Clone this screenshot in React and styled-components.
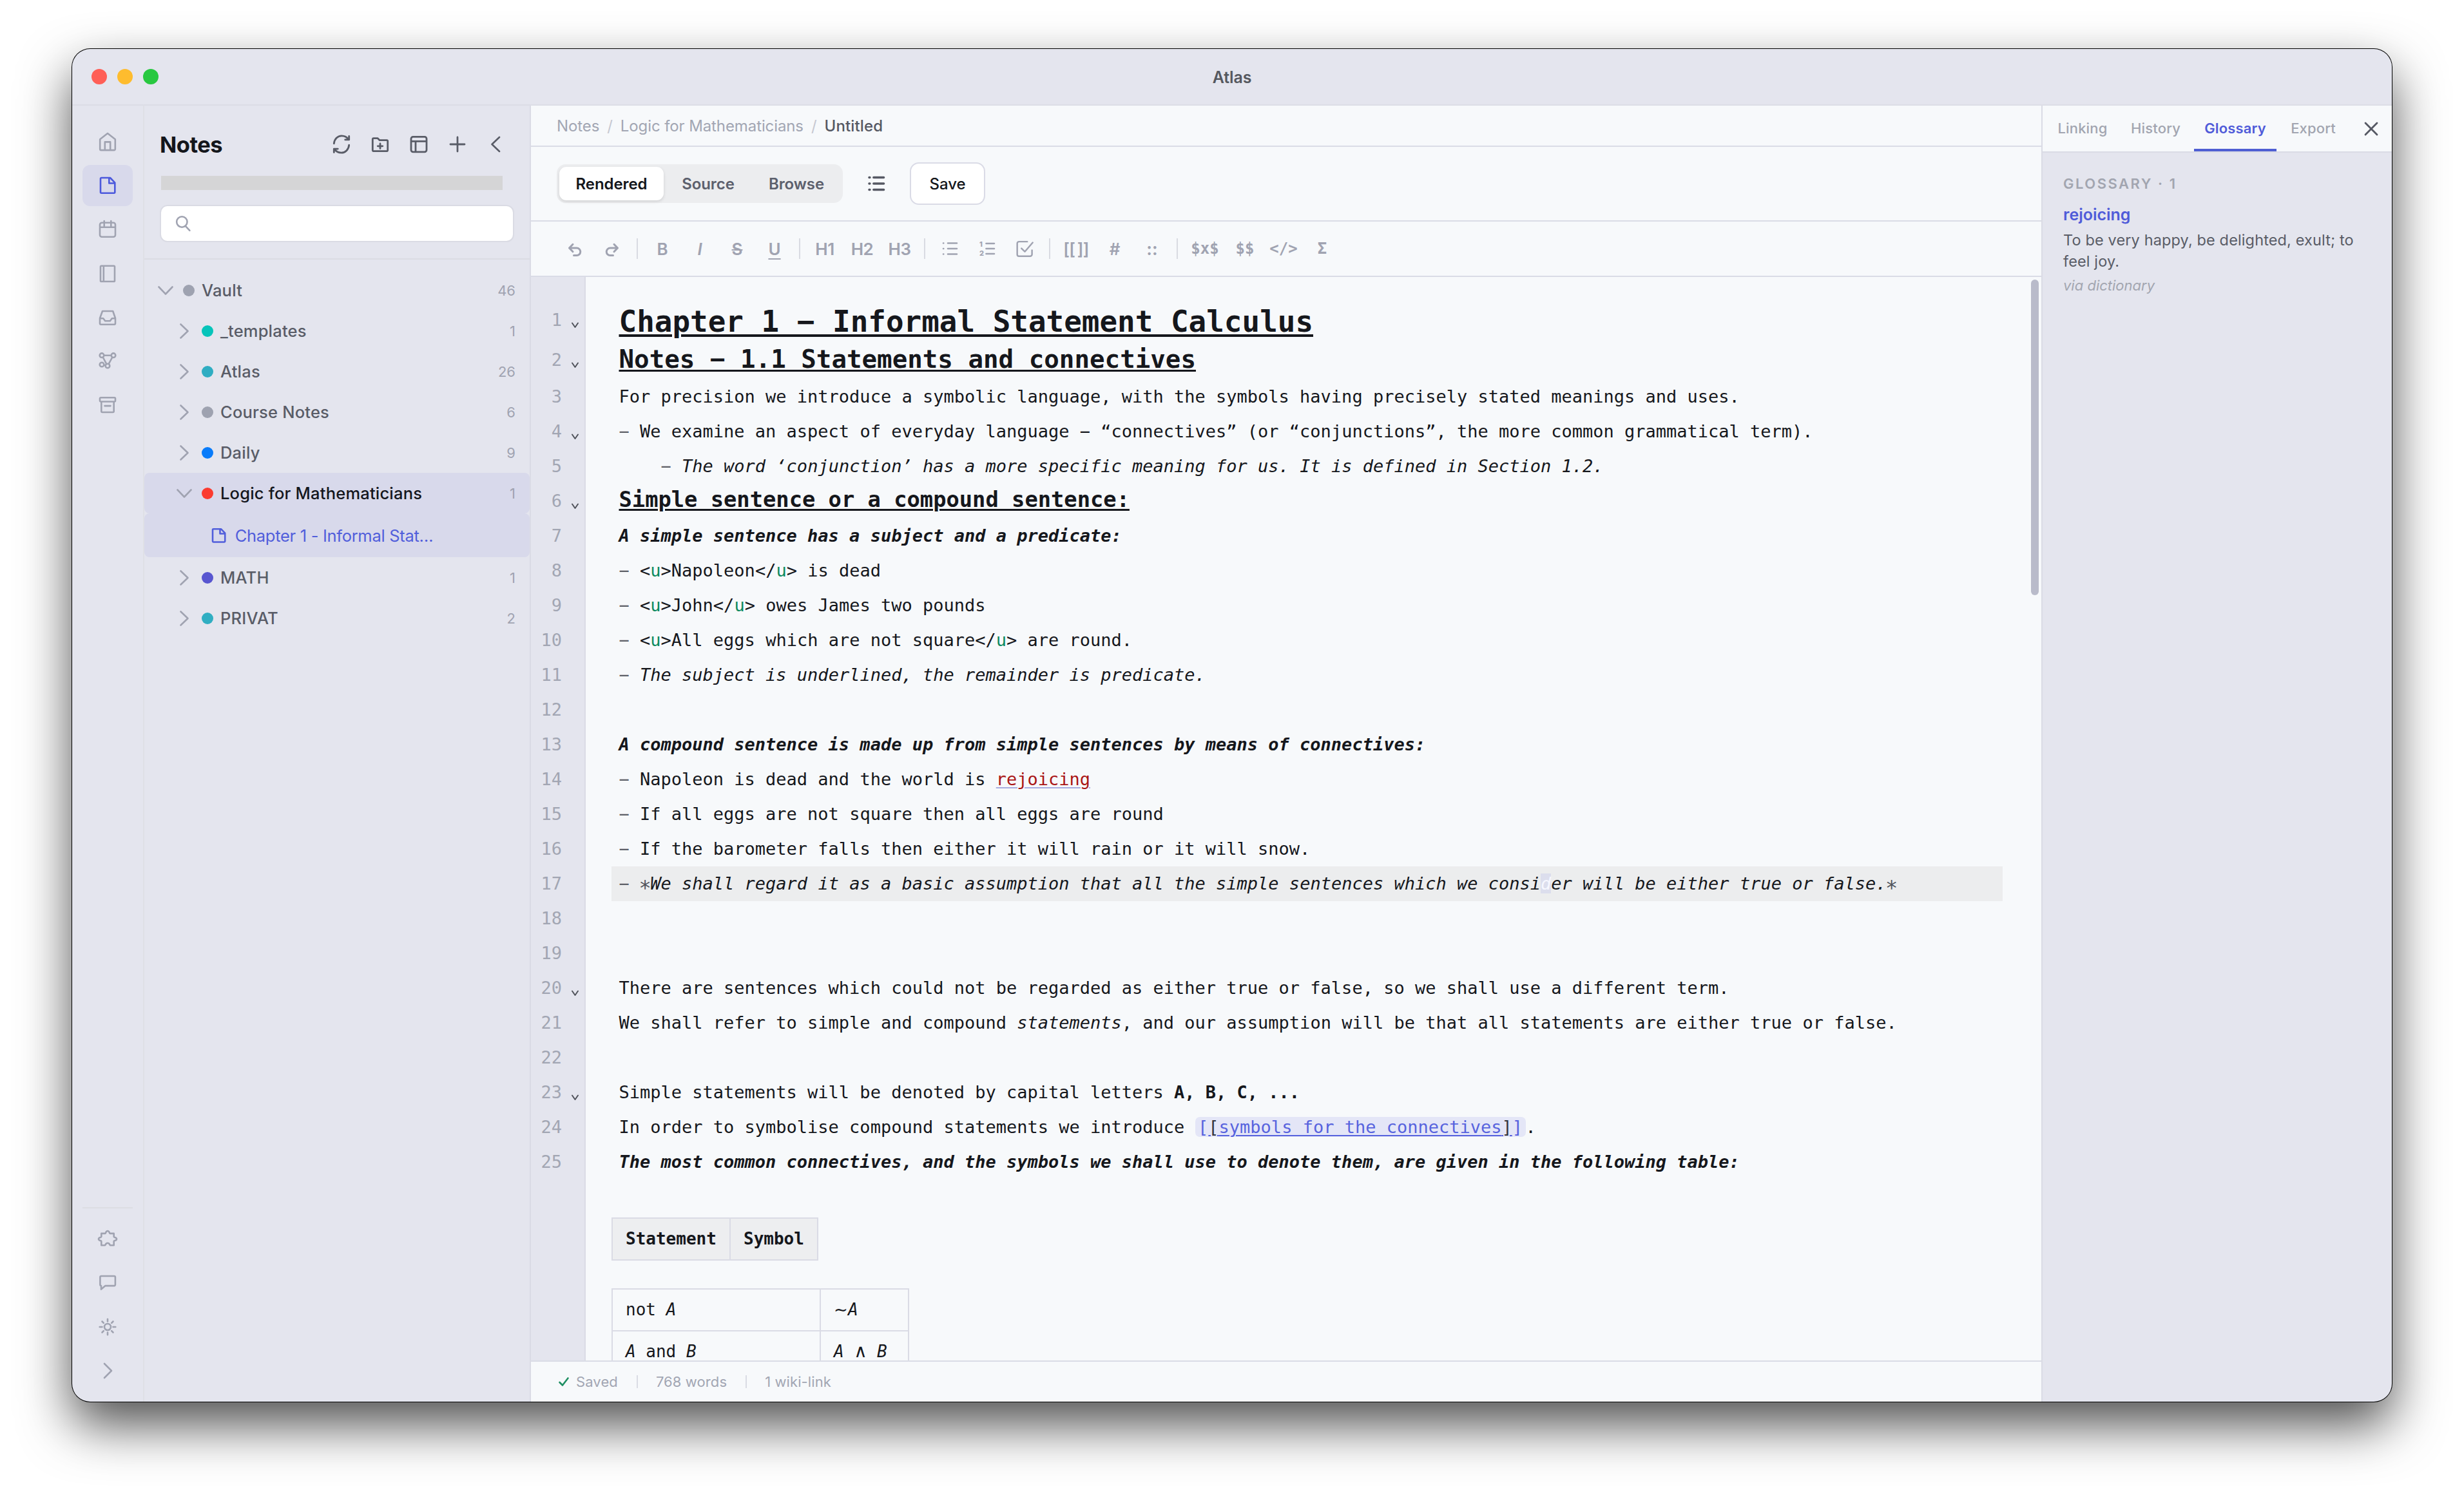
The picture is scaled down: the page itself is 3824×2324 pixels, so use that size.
import React from "react";
import styled, { createGlobalStyle } from "styled-components";


const sans = `"Inter", "Liberation Sans", sans-serif`;
const mono = `"DejaVu Sans Mono", "Liberation Mono", monospace`;

const GlobalStyle = createGlobalStyle`
    * {
        box-sizing: border-box;
    }
    body {
        margin: 0;
        background-color: #fff;
        font-family: ${sans};
    }
`;

// window
const Page = styled.div`
    width: 3824px;
    height: 2324px;
    padding: 76px 112px;
    background-color: #fff;
    overflow: hidden;
`;
const Window = styled.div`
    width: 3600px;
    height: 2100px;
    display: flex;
    flex-direction: column;
    border-radius: 28px;
    overflow: hidden;
    background-color: #e4e5ee;
    box-shadow: 0 0 0 1px #000, 0 36px 80px rgba(0, 0, 0, 0.69);
`;
const TitleBar = styled.div`
    height: 88px;
    flex: none;
    display: grid;
    grid-template-columns: 1fr auto 1fr;
    align-items: center;
    padding: 0 30px;
    border-bottom: 2px solid #dcdde6;
`;
const Lights = styled.div`
    display: flex;
    gap: 16px;
`;
const Light = styled.span`
    width: 24px;
    height: 24px;
    border-radius: 50%;
    background-color: ${(props) => props.$color};
`;
const WindowTitle = styled.div`
    padding-top: 1px;
    font-size: 25px;
    font-weight: 600;
    letter-spacing: -0.1px;
    color: #55585f;
`;
const Body = styled.div`
    flex: 1;
    min-height: 0;
    display: flex;
`;

// left rail
const Rail = styled.nav`
    width: 112px;
    padding: 24px 16px 16px;
    border-right: 2px solid #dfe0e6;
    display: flex;
    flex-direction: column;
    justify-content: space-between;
`;
const RailGroup = styled.div`
    display: flex;
    flex-direction: column;
    gap: 4px;
    ${(props) => props.$bottom && "border-top: 2px solid #dcdde3; padding-top: 16px;"}
`;
const RailButton = styled.div`
    height: 64px;
    border-radius: 12px;
    display: flex;
    align-items: center;
    justify-content: center;
    color: ${(props) => (props.$active ? "#4c59dc" : "#a0a3b1")};
    background-color: ${(props) => (props.$active ? "#d8d9eb" : "transparent")};
`;
const Svg = styled.svg`
    display: block;
    flex: none;
    fill: none;
    stroke: currentColor;
    stroke-linecap: round;
    stroke-linejoin: round;
    overflow: visible;
`;

// notes panel
const Sidebar = styled.aside`
    width: 600px;
    border-right: 2px solid #dadbe5;
`;
const SidebarHead = styled.div`
    height: 239px;
    padding: 30px 24px 0;
    border-bottom: 2px solid #dadbe3;
`;
const SidebarTop = styled.div`
    height: 60px;
    display: flex;
    align-items: center;
    justify-content: space-between;
`;
const SidebarTitle = styled.h2`
    margin: 0;
    font-size: 34.5px;
    font-weight: 700;
    letter-spacing: -0.5px;
    color: #14161b;
`;
const HeadActions = styled.div`
    display: flex;
    gap: 24px;
    padding-right: 10px;
    color: #595c67;
`;
const PathBar = styled.div`
    width: 530px;
    height: 22px;
    margin: 19px 0 0 2px;
    background-color: #d5d5d6;
`;
const Search = styled.div`
    height: 58px;
    margin-top: 23px;
    padding-left: 19px;
    display: flex;
    align-items: center;
    border: 2px solid #dadbe4;
    border-radius: 12px;
    background-color: #fff;
    color: #a0a3b1;
`;
const Tree = styled.div`
    padding-top: 16px;
`;
const TreeRow = styled.div`
    height: ${(props) => (props.$file ? 68 : 63)}px;
    padding: 0 22px 0 ${(props) => 20 + props.$depth * 29}px;
    display: flex;
    align-items: center;
    border-radius: 8px;
    font-size: 25.5px;
    letter-spacing: ${(props) => (props.$file ? -0.3 : 0.2)}px;
    font-weight: ${(props) => (props.$file ? 400 : props.$active ? 500 : 450)};
    color: ${(props) => (props.$file ? "#515edb" : props.$active ? "#14161d" : "#595c67")};
    background-color: ${(props) => (props.$active ? "#d8d9eb" : "transparent")};
`;
const Caret = styled.span`
    width: 26px;
    margin-right: 14px;
    display: flex;
    justify-content: center;
    color: #a0a3b1;
`;
const Dot = styled.span`
    width: 18px;
    height: 18px;
    margin-right: 11px;
    border-radius: 50%;
    background-color: ${(props) => props.$color};
`;
const Count = styled.span`
    margin-left: auto;
    font-size: 22px;
    font-weight: 400;
    letter-spacing: 0;
    color: #a0a3b1;
`;
const FileName = styled.span`
    margin-left: 10px;
`;

// editor column
const Main = styled.main`
    width: 2344px;
    display: flex;
    flex-direction: column;
    background-color: #f7f9fb;
`;
const Crumbs = styled.div`
    height: 64px;
    flex: none;
    padding-left: 40px;
    display: flex;
    align-items: center;
    gap: 12px;
    border-bottom: 2px solid #dadce6;
    font-size: 24px;
    letter-spacing: -0.1px;
    color: #a2a6b3;
`;
const Slash = styled.span`
    color: #c6c8d1;
`;
const Current = styled.span`
    font-weight: 500;
    letter-spacing: 0.15px;
    color: #555863;
`;
const ViewBar = styled.div`
    height: 116px;
    flex: none;
    padding-left: 40px;
    display: flex;
    align-items: center;
    border-bottom: 2px solid #dadce6;
`;
const Segmented = styled.div`
    height: 60px;
    width: 444px;
    padding: 4px;
    display: flex;
    border-radius: 14px;
    background-color: #ecedef;
`;
const Segment = styled.div`
    width: ${(props) => props.$w}px;
    display: flex;
    align-items: center;
    justify-content: center;
    border-radius: 11px;
    font-size: 24px;
    font-weight: 600;
    letter-spacing: -0.1px;
    color: ${(props) => (props.$active ? "#14161b" : "#5c606d")};
    ${(props) => props.$active && "background-color: #fff; box-shadow: 0 2px 5px rgba(0, 0, 0, 0.12);"}
`;
const OutlineButton = styled.div`
    width: 104px;
    display: flex;
    justify-content: center;
    color: #555863;
`;
const SaveButton = styled.div`
    width: 117px;
    height: 66px;
    display: flex;
    align-items: center;
    justify-content: center;
    border: 2px solid #dadbe6;
    border-radius: 14px;
    background-color: #fff;
    font-size: 24px;
    font-weight: 500;
    letter-spacing: -0.1px;
    color: #14161b;
`;
const Toolbar = styled.div`
    height: 86px;
    flex: none;
    padding-left: 40px;
    display: flex;
    align-items: center;
    gap: 2px;
    border-bottom: 2px solid #dadce6;
    color: #a0a3b1;
`;
const Tool = styled.div`
    width: ${(props) => props.$w || 56}px;
    height: 52px;
    display: flex;
    align-items: center;
    justify-content: center;
    white-space: nowrap;
    font-family: ${(props) => (props.$mono ? mono : sans)};
    font-size: ${(props) => props.$size || 26}px;
    font-weight: ${(props) => props.$weight || 600};
    font-style: ${(props) => (props.$italic ? "italic" : "normal")};
    text-decoration: ${(props) => props.$line || "none"};
    text-decoration-thickness: 2px;
    text-underline-offset: 5px;
    letter-spacing: ${(props) => props.$spacing || 0}px;
    word-spacing: -2px;
`;
const ToolDivider = styled.span`
    width: 2px;
    height: 32px;
    margin: 0 8px;
    background-color: #d9dbe2;
`;

// editor text
const Editor = styled.div`
    flex: 1;
    min-height: 0;
    display: flex;
    overflow: hidden;
    font-family: ${mono};
    font-size: 27px;
    line-height: 54px;
    color: #15171c;
`;
const Gutter = styled.div`
    width: 85px;
    padding-top: 40px;
    border-right: 2px solid #dadbe5;
    background-color: #e4e5ee;
`;
const GutterRow = styled.div`
    height: ${(props) => props.$h}px;
    padding-right: 9px;
    display: flex;
    justify-content: flex-end;
    color: #a2a6b3;
`;
const Fold = styled.span`
    width: 26px;
    padding: 31px 0 0 15px;
    color: #50535b;
`;
const Content = styled.div`
    flex: 1;
    padding: 40px 40px 0 40px;
`;
const Line = styled.div`
    height: ${(props) => props.$h}px;
    padding-left: 11.5px;
    white-space: pre;
    ${(props) => props.$active && "background-color: #ecedee;"}
`;
const Heading = styled.div`
    font-size: ${(props) => props.$size}px;
    line-height: ${(props) => props.$lh}px;
    font-weight: 700;
    text-decoration: underline;
    text-decoration-thickness: ${(props) => props.$rule}px;
    text-underline-offset: ${(props) => props.$offset}px;
`;
const Mark = styled.span`
    color: #5d6067;
`;
const Star = styled.span`
    margin-left: -1.5px;
    font-size: 32px;
    letter-spacing: -1.5px;
    color: #50535b;
    line-height: 0;
    vertical-align: -8px;
`;
const TagName = styled.span`
    color: #0c8a5f;
`;
const BoldItalic = styled.span`
    font-weight: 700;
    font-style: italic;
`;
const Term = styled.span`
    color: #aa1616;
    text-decoration: underline;
    text-decoration-color: #a7ace0;
    text-decoration-thickness: 2px;
    text-underline-offset: 3px;
`;
const Cursor = styled.span`
    color: #f6f7ff;
    background-color: #dcdeed;
`;
const WikiLink = styled.span`
    padding: 0 4.5px;
    border-radius: 7px;
    background-color: #e4e6f7;
    color: #5763de;
`;
const WikiText = styled.span`
    text-decoration: underline;
    text-decoration-thickness: 2px;
    text-underline-offset: 3px;
    b {
        font-weight: 400;
        color: #33353c;
    }
`;
const Table = styled.table`
    margin: ${(props) => props.$top}px 0 0;
    border-collapse: separate;
    border-spacing: 0;
    table-layout: fixed;
    width: ${(props) => props.$w}px;
    border-top: 2px solid #dadbe5;
    border-left: 2px solid #dadbe5;
    font-size: 26px;
    line-height: 63px;
`;
const Cell = styled.td`
    width: ${(props) => props.$w}px;
    height: 65px;
    padding: 0 0 0 20px;
    border-right: 2px solid #dadbe5;
    border-bottom: 2px solid #dadbe5;
    white-space: pre;
    font-weight: ${(props) => (props.$head ? 700 : 400)};
    background-color: ${(props) => (props.$head ? "#edeef0" : "transparent")};
`;
// logic symbols take a fixed advance, wider than a letter
const Operator = styled.span`
    display: inline-block;
    width: ${(props) => props.$w}px;
    text-align: center;
    font-family: "DejaVu Sans", sans-serif;
    font-size: ${(props) => props.$size}px;
    line-height: 1;
`;
const ScrollTrack = styled.div`
    width: 20px;
    padding: 4px;
`;
const ScrollThumb = styled.div`
    width: 12px;
    height: 490px;
    border-radius: 6px;
    background-color: #b9bbca;
`;
const StatusBar = styled.div`
    height: 64px;
    flex: none;
    padding-left: 42px;
    display: flex;
    align-items: center;
    border-top: 2px solid #dadce6;
    font-size: 22px;
    letter-spacing: 0.1px;
    color: #a2a6b3;
`;
const Saved = styled.span`
    display: flex;
    align-items: center;
    gap: 10px;
    svg {
        color: #1f8f63;
    }
`;
const StatusDivider = styled.span`
    width: 2px;
    height: 20px;
    margin: 0 28px 0 29px;
    background-color: #dadce4;
`;

// right panel
const Panel = styled.aside`
    width: 544px;
    border-left: 2px solid #dadbe5;
`;
const Tabs = styled.div`
    height: 73px;
    padding-left: 8px;
    display: flex;
    gap: 4px;
    border-bottom: 2px solid #dadbe5;
    background-color: #f7f9fb;
`;
const Tab = styled.div`
    flex: none;
    width: ${(props) => props.$w}px;
    height: 71px;
    padding-top: 3px;
    display: flex;
    align-items: center;
    justify-content: center;
    font-size: 22px;
    font-weight: ${(props) => (props.$active ? 600 : 500)};
    letter-spacing: 0.15px;
    color: ${(props) => (props.$active ? "#4f5bd9" : "#a2a5b0")};
    border-bottom: 4px solid ${(props) => (props.$active ? "#4f5fd3" : "transparent")};
`;
const Close = styled.div`
    flex: 1;
    display: flex;
    align-items: center;
    justify-content: center;
    color: #555863;
`;
const Glossary = styled.div`
    padding: 33px 32px;
`;
const GlossaryTitle = styled.div`
    font-size: 22px;
    line-height: 30px;
    font-weight: 600;
    letter-spacing: 2.5px;
    color: #a2a5b0;
`;
const GlossaryTerm = styled.div`
    margin-top: 16px;
    font-size: 25px;
    line-height: 34px;
    font-weight: 600;
    letter-spacing: 0;
    color: #4f5bd9;
`;
const Definition = styled.div`
    margin-top: 6px;
    font-size: 23.5px;
    line-height: 33px;
    letter-spacing: 0.13px;
    white-space: nowrap;
    color: #595c66;
`;
const Source = styled.div`
    margin-top: 6px;
    font-size: 22px;
    line-height: 30px;
    font-style: italic;
    color: #a2a5b0;
`;

// every 36px icon shares one grid
const icons = {
    home: "M6.2 14.2 18 5l11.8 9.2v15.3a1.6 1.6 0 0 1-1.6 1.6H7.8a1.6 1.6 0 0 1-1.6-1.6zM13.8 31V18.4h8.4V31",
    note: "M22 6H8.4A1.4 1.4 0 0 0 7 7.4v20.9a1.4 1.4 0 0 0 1.4 1.4h19.5a1.4 1.4 0 0 0 1.4-1.4V13.6zM20.3 6.5v8h8.8",
    calendar: "M9 7.8h18a3 3 0 0 1 3 3v15.9a3 3 0 0 1-3 3H9a3 3 0 0 1-3-3V10.8a3 3 0 0 1 3-3zM6 14.7h24M12.7 5v8.5M23.3 5v8.5",
    book: "M8.3 6.8h19.4A1.3 1.3 0 0 1 29 8.1v21.6a1.3 1.3 0 0 1-1.3 1.3H8.3A1.3 1.3 0 0 1 7 29.7V8.1a1.3 1.3 0 0 1 1.3-1.3zM11.8 7v24",
    inbox: "M10 9h16.2L30 20v8a1.7 1.7 0 0 1-1.7 1.7H7.7A1.7 1.7 0 0 1 6 28v-8zM6 20.3h5.2l3 3.9h7.6l3-3.9H30",
    graph: "M12.3 9.7h11.4M10.7 12.5l5.6 10.6M25.4 12.5l-5.8 10.6M12.3 24.7l2.4.6M12.3 9.7a3.3 3.3 0 1 1-6.6 0 3.3 3.3 0 0 1 6.6 0zM30.3 9.7a3.3 3.3 0 1 1-6.6 0 3.3 3.3 0 0 1 6.6 0zM12.3 24a3.3 3.3 0 1 1-6.6 0 3.3 3.3 0 0 1 6.6 0zM21.3 26a3.3 3.3 0 1 1-6.6 0 3.3 3.3 0 0 1 6.6 0z",
    archive: "M7.4 7.2h21.2A1.4 1.4 0 0 1 30 8.6v3.5a1.4 1.4 0 0 1-1.4 1.4H7.4A1.4 1.4 0 0 1 6 12.1V8.6a1.4 1.4 0 0 1 1.4-1.4zM8.3 13.5v15a1.5 1.5 0 0 0 1.5 1.5h16.4a1.5 1.5 0 0 0 1.5-1.5v-15M13.5 20.1h9",
    puzzle: "M8.3 8.9H14.2C15.6 8.9 14.6 5 18 5s2.4 3.9 3.8 3.9h5.9v5.2c0 1.4 4.3.4 4.3 3.5s-4.3 2-4.3 3.4v6.3h-5.4c-1.3 0-.8-3.6-4.3-3.6s-3 3.6-4.3 3.6H8.3V21c0-1.4-4.3-.4-4.3-3.4s4.3-2.1 4.3-3.5z",
    comment: "M8 27.6V22.1A1.8 1.8 0 0 1 6.4 20.3V8.8A1.8 1.8 0 0 1 8.2 7h19.9a1.8 1.8 0 0 1 1.8 1.8v11.5a1.8 1.8 0 0 1-1.8 1.8H14.5z",
    sun: "M23 18a5 5 0 1 1-10 0 5 5 0 0 1 10 0zM18 5.7v3.8M18 26.5v3.8M5.7 18h3.8M26.5 18h3.8M9.5 9.5l2.3 2.3M24.2 24.2l2.3 2.3M9.5 26.5l2.3-2.3M24.2 11.8l2.3-2.3",
    right: "M13 7l11 11-11 11",
    left: "M23 7l-11.5 11 11.5 11",
    plus: "M18 7v22M7 18h22",
    refresh: "M6.3 16.8C6.9 10 11.9 4.8 18.2 4.8c4.5 0 8.6 2.5 10.8 5.8M29.7 5.5v5.4h-6M29.7 19.2c-.6 6.8-5.6 12-11.9 12-4.5 0-8.6-2.5-10.8-5.8M6.3 30.5v-5.4h6",
    folder: "M6.3 10.2a1.5 1.5 0 0 1 1.5-1.5h6.4l3 3h11a1.5 1.5 0 0 1 1.5 1.5v14a1.5 1.5 0 0 1-1.5 1.5H7.8a1.5 1.5 0 0 1-1.5-1.5zM18 17v7.6M14.2 20.8h7.6",
    layout: "M9 6.3h18a3 3 0 0 1 3 3v17.5a3 3 0 0 1-3 3H9a3 3 0 0 1-3-3V9.3a3 3 0 0 1 3-3zM6 13.3h24M13 13.3v16.5",
    bullets: "M15 9.5H29M15 18H29M15 26.5H29M8 9.5h.3M8 18h.3M8 26.5h.3",
    outline: "M14 9H29M14 18H29M14 27H29M7.5 9h1M7.5 18h1M7.5 27h1",
    check: "M22.5 6.5H9a3 3 0 0 0-3 3v18a3 3 0 0 0 3 3h18.3a3 3 0 0 0 3-3v-7M13 17.5l5.5 5.5L31.5 8",
    undo: "M15 11.3 9.5 17l5.5 5.7M9.5 17H21a5.8 5.8 0 0 1 0 11.6h-4.5",
    redo: "M21 11.3 26.5 17l-5.5 5.7M26.5 17H15a5.8 5.8 0 0 0 0 11.6h4.5",
    close: "M8.5 8.5l19 19M27.5 8.5l-19 19",
    search: "M25 14.5a9.5 9.5 0 1 1-19 0 9.5 9.5 0 0 1 19 0zM21.8 22 29.5 30",
};

const Icon = ({ name, size = 36, stroke = 2.6 }) => (
    <Svg width={size} height={size} viewBox="0 0 36 36" strokeWidth={stroke}>
        <path d={icons[name]} />
    </Svg>
);

// numbered list keeps its digits as text
const NumberedIcon = () => (
    <Svg width="24" height="24" viewBox="0 0 24 24" strokeWidth="2.6">
        <path d="M10.5 4h12.5M10.5 12h12.5M10.5 20h12.5" />
        <text x="0" y="9" fontSize="11" fontWeight="800" fill="currentColor" stroke="none">1</text>
        <text x="0" y="23" fontSize="11" fontWeight="800" fill="currentColor" stroke="none">2</text>
    </Svg>
);

const FoldIcon = () => (
    <Svg width="11" height="8" viewBox="0 0 11 8" strokeWidth="2">
        <path d="M1 0.5 5.5 7 10 0.5" />
    </Svg>
);

const railTop = ["home", "note", "calendar", "book", "inbox", "graph", "archive"];
const railBottom = ["puzzle", "comment", "sun", "right"];

const folders = [
    { name: "Vault", color: "#9ea2b0", count: 46, depth: 0, open: true },
    { name: "_templates", color: "#06c4ba", count: 1, depth: 1 },
    { name: "Atlas", color: "#2fadc2", count: 26, depth: 1 },
    { name: "Course Notes", color: "#9ea2b0", count: 6, depth: 1 },
    { name: "Daily", color: "#087bfa", count: 9, depth: 1 },
    { name: "Logic for Mathematicians", color: "#fb3b30", count: 1, depth: 1, open: true, active: true },
    { file: true, name: "Chapter 1 - Informal Stat…" },
    { name: "MATH", color: "#5856d0", count: 1, depth: 1 },
    { name: "PRIVAT", color: "#30aec2", count: 2, depth: 1 },
];

const Tag = ({ children }) => (
    <>
        {"<"}<TagName>u</TagName>{">"}{children}{"</"}<TagName>u</TagName>{">"}
    </>
);

const lines = [
    { h: 62, fold: true, text: <Heading $size={45.9} $lh={58} $rule={4} $offset={4}>Chapter 1 − Informal Statement Calculus</Heading> },
    { h: 57, fold: true, text: <Heading $size={39.15} $lh={51} $rule={3} $offset={3}>Notes − 1.1 Statements and connectives</Heading> },
    { text: "For precision we introduce a symbolic language, with the symbols having precisely stated meanings and uses." },
    { fold: true, text: <><Mark>−</Mark> We examine an aspect of everyday language − “connectives” (or “conjunctions”, the more common grammatical term).</> },
    { text: <>{"    "}<Mark>−</Mark> <i>The word ‘conjunction’ has a more specific meaning for us. It is defined in Section 1.2.</i></> },
    { fold: true, text: <Heading $size={33.75} $lh={49} $rule={3} $offset={3}>Simple sentence or a compound sentence:</Heading> },
    { text: <BoldItalic>A simple sentence has a subject and a predicate:</BoldItalic> },
    { text: <><Mark>−</Mark> <Tag>Napoleon</Tag> is dead</> },
    { text: <><Mark>−</Mark> <Tag>John</Tag> owes James two pounds</> },
    { text: <><Mark>−</Mark> <Tag>All eggs which are not square</Tag> are round.</> },
    { text: <><Mark>−</Mark> <i>The subject is underlined, the remainder is predicate.</i></> },
    { text: "" },
    { text: <BoldItalic>A compound sentence is made up from simple sentences by means of connectives:</BoldItalic> },
    { text: <><Mark>−</Mark> Napoleon is dead and the world is <Term>rejoicing</Term></> },
    { text: <><Mark>−</Mark> If all eggs are not square then all eggs are round</> },
    { text: <><Mark>−</Mark> If the barometer falls then either it will rain or it will snow.</> },
    {
        active: true,
        text: (
            <>
                <Mark>−</Mark> <Star>*</Star>
                <i>We shall regard it as a basic assumption that all the simple sentences which we consi<Cursor>d</Cursor>er will be either true or false.</i>
                <Star>*</Star>
            </>
        ),
    },
    { text: "" },
    { text: "" },
    { fold: true, text: "There are sentences which could not be regarded as either true or false, so we shall use a different term." },
    { text: <>We shall refer to simple and compound <i>statements</i>, and our assumption will be that all statements are either true or false.</> },
    { text: "" },
    { fold: true, text: <>Simple statements will be denoted by capital letters <b>A, B, C, ...</b></> },
    {
        text: (
            <>
                In order to symbolise compound statements we introduce{" "}
                <WikiLink>[<WikiText><b>[</b>symbols for the connectives<b>]</b></WikiText>]</WikiLink>.
            </>
        ),
    },
    { text: <BoldItalic>The most common connectives, and the symbols we shall use to denote them, are given in the following table:</BoldItalic> },
];

const NotesPanel = () => (
    <Sidebar>
        <SidebarHead>
            <SidebarTop>
                <SidebarTitle>Notes</SidebarTitle>
                <HeadActions>
                    <Icon name="refresh" stroke={2.8} />
                    <Icon name="folder" stroke={2.8} />
                    <Icon name="layout" stroke={2.8} />
                    <Icon name="plus" stroke={2.8} />
                    <Icon name="left" stroke={2.6} />
                </HeadActions>
            </SidebarTop>
            <PathBar />
            <Search>
                <Icon name="search" size={31} stroke={3} />
            </Search>
        </SidebarHead>
        <Tree>
            {folders.map((item) =>
                item.file ? (
                    <TreeRow key={item.name} $file $active $depth={2.75}>
                        <Icon name="note" size={31} stroke={3} />
                        <FileName>{item.name}</FileName>
                    </TreeRow>
                ) : (
                    <TreeRow key={item.name} $depth={item.depth} $active={item.active}>
                        <Caret>
                            {item.open ? (
                                <Svg width="24" height="14" viewBox="0 0 24 14" strokeWidth="2.6">
                                    <path d="M1.5 1.5 12 12.5 22.5 1.5" />
                                </Svg>
                            ) : (
                                <Svg width="14" height="24" viewBox="0 0 14 24" strokeWidth="2.6">
                                    <path d="M1.5 1.5 12.5 12 1.5 22.5" />
                                </Svg>
                            )}
                        </Caret>
                        <Dot $color={item.color} />
                        {item.name}
                        <Count>{item.count}</Count>
                    </TreeRow>
                )
            )}
        </Tree>
    </Sidebar>
);

const FormatBar = () => (
    <Toolbar>
        <Tool><Icon name="undo" stroke={3} /></Tool>
        <Tool><Icon name="redo" stroke={3} /></Tool>
        <ToolDivider />
        <Tool>B</Tool>
        <Tool $italic>I</Tool>
        <Tool $line="line-through">S</Tool>
        <Tool $line="underline">U</Tool>
        <ToolDivider />
        <Tool $spacing={-0.5}>H1</Tool>
        <Tool $spacing={-0.5}>H2</Tool>
        <Tool $spacing={-0.5}>H3</Tool>
        <ToolDivider />
        <Tool><Icon name="bullets" /></Tool>
        <Tool><NumberedIcon /></Tool>
        <Tool><Icon name="check" size={34} /></Tool>
        <ToolDivider />
        <Tool $w={60} $spacing={-0.8}>[[ ]]</Tool>
        <Tool>#</Tool>
        <Tool $weight={700}>::</Tool>
        <ToolDivider />
        <Tool $w={64} $mono $size={24} $weight={700}>$x$</Tool>
        <Tool $mono $size={24} $weight={700}>$$</Tool>
        <Tool $w={60} $mono $size={24} $weight={700}>{"</>"}</Tool>
        <Tool $mono $size={24} $weight={700}>Σ</Tool>
    </Toolbar>
);

const TextArea = () => (
    <Editor>
        <Gutter>
            {lines.map((line, i) => (
                <GutterRow key={i} $h={line.h || 54}>
                    {i + 1}
                    <Fold>{line.fold && <FoldIcon />}</Fold>
                </GutterRow>
            ))}
        </Gutter>
        <Content>
            {lines.map((line, i) => (
                <Line key={i} $h={line.h || 54} $active={line.active}>{line.text}</Line>
            ))}
            <Table $top={59} $w={321}>
                <tbody>
                    <tr>
                        <Cell $head $w={183}>Statement</Cell>
                        <Cell $head $w={136}>Symbol</Cell>
                    </tr>
                </tbody>
            </Table>
            <Table $top={43} $w={462}>
                <tbody>
                    <tr>
                        <Cell $w={323}>not <i>A</i></Cell>
                        <Cell $w={137}><Operator $w={22} $size={26}>∼</Operator><i>A</i></Cell>
                    </tr>
                    <tr>
                        <Cell $w={323}><i>A</i> and <i>B</i></Cell>
                        <Cell $w={137}><i>A</i> <Operator $w={20} $size={28}>∧</Operator> <i>B</i></Cell>
                    </tr>
                </tbody>
            </Table>
        </Content>
        <ScrollTrack>
            <ScrollThumb />
        </ScrollTrack>
    </Editor>
);

const App = () => {
    return (
        <Page>
            <GlobalStyle />
            <Window>
                <TitleBar>
                    <Lights>
                        <Light $color="#ff5f57" />
                        <Light $color="#febc2e" />
                        <Light $color="#28c840" />
                    </Lights>
                    <WindowTitle>Atlas</WindowTitle>
                </TitleBar>
                <Body>
                    <Rail>
                        <RailGroup>
                            {railTop.map((name) => (
                                <RailButton key={name} $active={name === "note"}>
                                    <Icon name={name} />
                                </RailButton>
                            ))}
                        </RailGroup>
                        <RailGroup $bottom>
                            {railBottom.map((name) => (
                                <RailButton key={name}>
                                    <Icon name={name} />
                                </RailButton>
                            ))}
                        </RailGroup>
                    </Rail>
                    <NotesPanel />
                    <Main>
                        <Crumbs>
                            <span>Notes</span>
                            <Slash>/</Slash>
                            <span>Logic for Mathematicians</span>
                            <Slash>/</Slash>
                            <Current>Untitled</Current>
                        </Crumbs>
                        <ViewBar>
                            <Segmented>
                                <Segment $w={162} $active>Rendered</Segment>
                                <Segment $w={138}>Source</Segment>
                                <Segment $w={136}>Browse</Segment>
                            </Segmented>
                            <OutlineButton>
                                <Icon name="outline" size={38} stroke={3.2} />
                            </OutlineButton>
                            <SaveButton>Save</SaveButton>
                        </ViewBar>
                        <FormatBar />
                        <TextArea />
                        <StatusBar>
                            <Saved>
                                <Svg width="18" height="16" viewBox="0 0 18 16" strokeWidth="2.6">
                                    <path d="M2.5 9 7 13.5 15.5 2.5" />
                                </Svg>
                                Saved
                            </Saved>
                            <StatusDivider />
                            768 words
                            <StatusDivider />
                            1 wiki-link
                        </StatusBar>
                    </Main>
                    <Panel>
                        <Tabs>
                            <Tab $w={108}>Linking</Tab>
                            <Tab $w={111}>History</Tab>
                            <Tab $w={128} $active>Glossary</Tab>
                            <Tab $w={106}>Export</Tab>
                            <Close>
                                <Icon name="close" size={34} stroke={3} />
                            </Close>
                        </Tabs>
                        <Glossary>
                            <GlossaryTitle>GLOSSARY · 1</GlossaryTitle>
                            <GlossaryTerm>rejoicing</GlossaryTerm>
                            <Definition>
                                To be very happy, be delighted, exult; to
                                <br />
                                feel joy.
                            </Definition>
                            <Source>via dictionary</Source>
                        </Glossary>
                    </Panel>
                </Body>
            </Window>
        </Page>
    );
};

export default App;
